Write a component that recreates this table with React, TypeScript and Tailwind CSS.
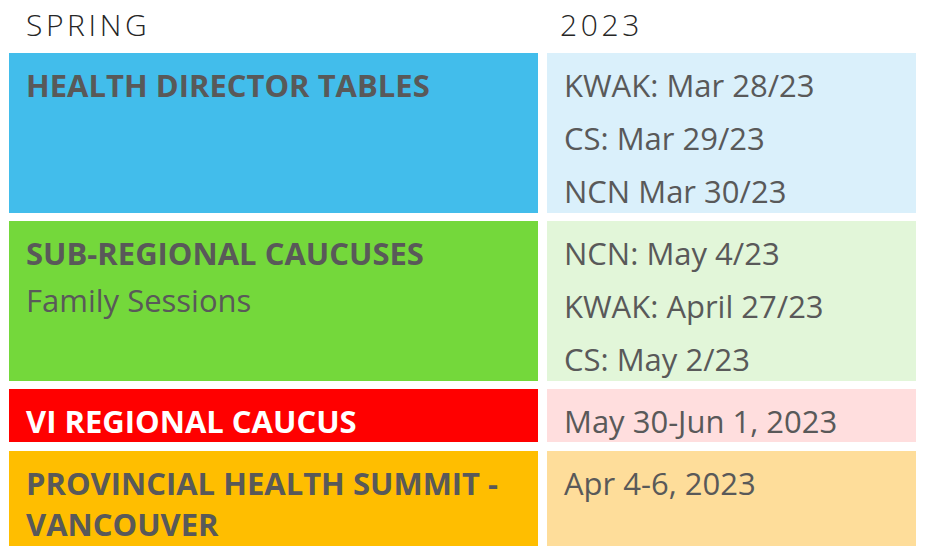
type Row = {
  title: string
  sub?: string
  dates: string[]
  h: string
  left: string
  right: string
  titleColor: string
}

const rows: Row[] = [
  {
    title: 'HEALTH DIRECTOR TABLES',
    dates: ['KWAK: Mar 28/23', 'CS: Mar 29/23', 'NCN Mar 30/23'],
    h: 'h-[160px]',
    left: 'bg-[#42bdeb]',
    right: 'bg-[#daf0fb]',
    titleColor: 'text-[#595959]',
  },
  {
    title: 'SUB-REGIONAL CAUCUSES',
    sub: 'Family Sessions',
    dates: ['NCN: May 4/23', 'KWAK: April 27/23', 'CS: May 2/23'],
    h: 'h-[160px]',
    left: 'bg-[#74d83b]',
    right: 'bg-[#e2f6d9]',
    titleColor: 'text-[#595959]',
  },
  {
    title: 'VI REGIONAL CAUCUS',
    dates: ['May 30-Jun 1, 2023'],
    h: 'h-[53px]',
    left: 'bg-[#ff0000]',
    right: 'bg-[#ffdede]',
    titleColor: 'text-white',
  },
  {
    title: 'PROVINCIAL HEALTH SUMMIT - VANCOUVER',
    dates: ['Apr 4-6, 2023'],
    h: 'h-[95px]',
    left: 'bg-[#ffbe00]',
    right: 'bg-[#fedd9a]',
    titleColor: 'text-[#595959]',
  },
]

export default function App() {
  return (
    <div className="w-[927px] h-[559px] bg-white pl-[9px] font-['Open_Sans',sans-serif] overflow-hidden">
      {/* header */}
      <div className="flex h-[53px] pt-[4px] text-[30px] leading-[41px] font-light tracking-[0.12em] text-[#262626]">
        <div className="w-[538px] pl-[17px]">SPRING</div>
        <div className="pl-[13px]">2023</div>
      </div>

      <div className="flex flex-col gap-[8px]">
        {rows.map((r, i) => (
          <div key={i} className={`flex gap-[9px] ${r.h} ${i === 3 ? 'mt-[1px]' : ''}`}>
            <div className={`w-[529px] ${r.left} px-[17px] pt-[12px] overflow-hidden`}>
              <p className={`text-[31px] leading-[41px] font-bold ${r.titleColor}`}>{r.title}</p>
              {r.sub && <p className="text-[31px] leading-[41px] mt-[6px] text-[#595959]">{r.sub}</p>}
            </div>
            <div className={`w-[369px] ${r.right} px-[17px] pt-[6px] overflow-hidden`}>
              {r.dates.map((d) => (
                <p key={d} className="text-[31px] leading-[53px] text-[#595959] whitespace-nowrap">
                  {d}
                </p>
              ))}
            </div>
          </div>
        ))}
      </div>
    </div>
  )
}
